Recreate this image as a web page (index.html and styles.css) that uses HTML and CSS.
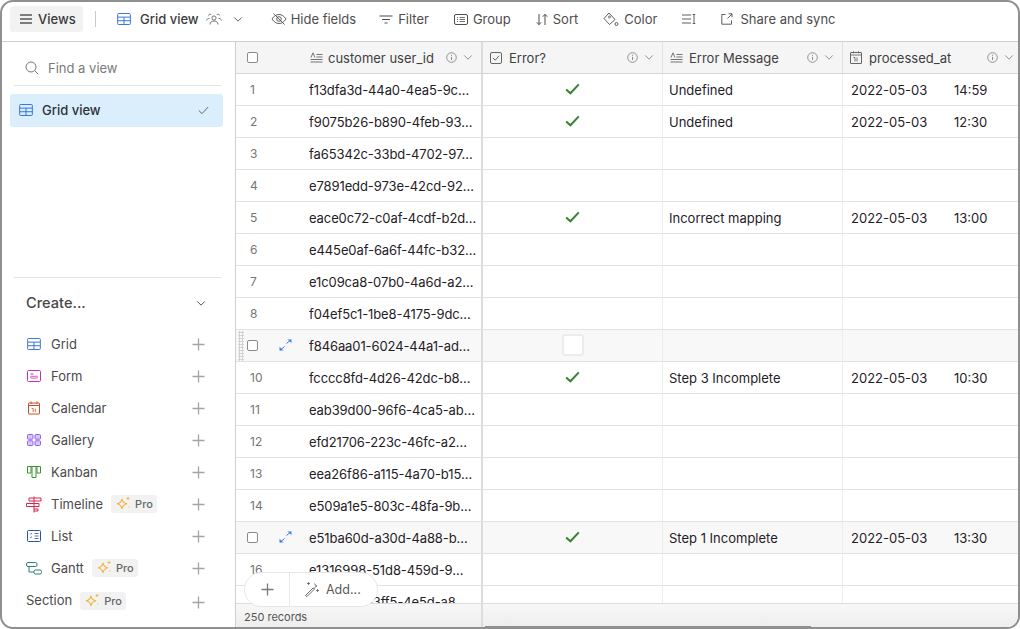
FILE: index.html
```html
<!DOCTYPE html>
<html lang="en">
<head>
<meta charset="utf-8">
<title>Grid view</title>
<link rel="stylesheet" href="styles.css">
</head>
<body>
<svg class="defs" width="0" height="0" aria-hidden="true">
  <symbol id="grid" viewBox="0 0 16 14"><rect x=".6" y=".6" width="14.8" height="12.8" rx="1" fill="none" stroke="currentColor" stroke-width="1.1"/><path d="M.6 4.800h14.800M.6 9h14.800M8 4.800v8.600" fill="none" stroke="currentColor" stroke-width="1.1"/></symbol>
  <symbol id="chev" viewBox="0 0 12 8"><path d="M1.500 1.500 6 6l4.500-4.500" fill="none" stroke="currentColor" stroke-width="1.1"/></symbol>
  <symbol id="plus" viewBox="0 0 13 13"><path d="M6.500.5v12M.5 6.500h12" fill="none" stroke="currentColor" stroke-width="1.3"/></symbol>
  <symbol id="info" viewBox="0 0 11 11"><circle cx="5.500" cy="5.500" r="4.800" fill="none" stroke="currentColor" stroke-width=".9"/><path d="M5.500 4.800v3.200M5.500 2.800v1" fill="none" stroke="currentColor"/></symbol>
  <symbol id="text" viewBox="0 0 13 11"><path d="M3 .8 1 5.500M3 .8l2 4.700M6.500 2.500h6M6.500 5h6M.5 7.500h12M.5 10h12" fill="none" stroke="currentColor" stroke-width=".9"/></symbol>
  <symbol id="check" viewBox="0 0 15 12"><path d="M1.200 6.400 5.400 10.300 13.800 1.400" fill="none" stroke="currentColor" stroke-width="2"/></symbol>
  <symbol id="expand" viewBox="0 0 13 12"><path d="M7.500 4.500 11.500 1M1.500 11 5.500 7.500" fill="none" stroke="currentColor" stroke-width="1"/><path d="M8.500.5h4v3.600zM.5 11.500V7.800l4 3.700z" fill="currentColor"/></symbol>
  <symbol id="spark" viewBox="0 0 16 16"><path d="M7 2.800c.5 3 1.700 4.300 5 5-3.300.7-4.500 2-5 5.200-.5-3.200-1.700-4.500-5-5.200 3.300-.7 4.500-2 5-5z" fill="none" stroke="currentColor" stroke-width="1.100"/><path d="M13 1v3M11.500 2.500h3M13.800 10.500v1" fill="none" stroke="currentColor" stroke-width=".9"/></symbol>
</svg>

<div class="window">
  <header class="toolbar">
    <button class="views-btn">
      <svg class="ic12" viewBox="0 0 12 10"><path d="M0 1h12M0 5h12M0 9h12" fill="none" stroke="currentColor" stroke-width="1.300"/></svg>
      Views
    </button>
    <span class="tb-sep"></span>
    <span class="tb-view">
      <svg class="ic-grid blue"><use href="#grid"/></svg>
      <span class="tb-view-name">Grid view</span>
      <svg class="ic-people" viewBox="0 0 16 12"><circle cx="8" cy="5" r="2.100" fill="none" stroke="currentColor" stroke-width=".8"/><path d="M4 11.500c.3-2.500 1.700-3.500 4-3.500s3.700 1 4 3.500M2.500 2.500a1.500 1.500 0 0 1 2.800-.5M13.500 2.500a1.500 1.500 0 0 0-2.800-.5M.5 7.500C.8 6 2 5.500 3.500 5.500M15.500 7.500c-.3-1.500-1.500-2-3-2" fill="none" stroke="currentColor" stroke-width=".8"/></svg>
      <svg class="ic-chev tb-chev"><use href="#chev"/></svg>
    </span>
    <span class="tb-item tb-hide">
      <svg class="ic16" viewBox="0 0 16 12"><path d="M1 6c2-3 4.300-4.500 7-4.500S13 3 15 6c-2 3-4.300 4.500-7 4.500S3 9 1 6z" fill="none" stroke="currentColor" stroke-width=".9"/><circle cx="8" cy="6" r="2.300" fill="none" stroke="currentColor" stroke-width=".9"/><path d="M2.500 .5 13.500 11.500" stroke="currentColor" stroke-width=".9"/></svg>
      Hide fields
    </span>
    <span class="tb-item tb-filter">
      <svg class="ic15" viewBox="0 0 14 9"><path d="M.5 1h13M3 4.500h8M5.500 8h3" fill="none" stroke="currentColor" stroke-width="1.100"/></svg>
      Filter
    </span>
    <span class="tb-item tb-group">
      <svg class="ic14" viewBox="0 0 14 11"><rect x=".5" y=".5" width="13" height="10" rx="1.500" fill="none" stroke="currentColor"/><path d="M3 3.500h1M5.500 3.500h5.500M3 5.500h1M5.500 5.500h5.500M3 7.500h1M5.500 7.500h5.500" stroke="currentColor" stroke-width=".8"/></svg>
      Group
    </span>
    <span class="tb-item tb-sort">
      <svg class="ic13" viewBox="0 0 12 13"><path d="M3 1v10.500M.8 9.300 3 11.700l2.200-2.400M9 12V1.500M6.800 3.700 9 1.300l2.200 2.400" fill="none" stroke="currentColor" stroke-width="1"/></svg>
      Sort
    </span>
    <span class="tb-item tb-color">
      <svg class="ic16b" viewBox="0 0 16 15"><path d="M6 1 1 6.500l5.500 6L12 7.500z" fill="none" stroke="currentColor" stroke-width=".9"/><circle cx="6.500" cy="5" r="1" fill="none" stroke="currentColor" stroke-width=".8"/><circle cx="13.500" cy="12" r="1.500" fill="none" stroke="currentColor" stroke-width=".9"/></svg>
      Color
    </span>
    <svg class="ic-density" viewBox="0 0 14 10"><path d="M0 1h9M0 5h9M0 9h9M12 .5v9M10.700.5h2.600M10.700 9.500h2.600" fill="none" stroke="currentColor" stroke-width=".9"/></svg>
    <span class="tb-item tb-share">
      <svg class="ic12b" viewBox="0 0 12 12"><path d="M4.500 1.500H.8v9.700h9.700V7.500M6.500 5.500l4.500-4.500M7.500.8H11v3.500" fill="none" stroke="currentColor" stroke-width=".9"/></svg>
      Share and sync
    </span>
  </header>

  <div class="main">
    <aside class="sidebar">
      <div class="side-top">
        <div class="search">
          <svg class="ic-search" viewBox="0 0 14 14"><circle cx="6" cy="6" r="5" fill="none" stroke="currentColor" stroke-width="1"/><path d="m9.700 9.700 3.500 3.500" stroke="currentColor" stroke-width="1"/></svg>
          <span>Find a view</span>
        </div>
        <div class="view-active">
          <svg class="ic-grid blue"><use href="#grid"/></svg>
          <span class="view-active-name">Grid view</span>
          <svg class="ic-tick" viewBox="0 0 11 9"><path d="M.8 4.500 4 7.600 10.200 1" fill="none" stroke="currentColor" stroke-width="1"/></svg>
        </div>
      </div>
      <div class="create">
        <div class="create-head"><span>Create...</span><svg class="ic-chev create-chev"><use href="#chev"/></svg></div>
        <ul class="create-list">
          <li class="create-row"><svg class="ic-grid blue"><use href="#grid"/></svg><span class="cname">Grid</span><svg class="ic-plus"><use href="#plus"/></svg></li>
          <li class="create-row"><svg class="ic-type pink" viewBox="0 0 14 12"><rect x=".5" y=".5" width="13" height="11" rx="1" fill="none" stroke="currentColor"/><path d="M3.500 4h3" stroke="currentColor"/><rect x="3.500" y="6.300" width="7" height="1.800" rx=".9" fill="none" stroke="currentColor" stroke-width=".8"/></svg><span class="cname">Form</span><svg class="ic-plus"><use href="#plus"/></svg></li>
          <li class="create-row"><svg class="ic-type orange" viewBox="0 0 14 14"><rect x="1.500" y="2" width="11" height="11" rx=".5" fill="none" stroke="currentColor"/><path d="M1.500 4.500h11M4 .5v2.500M10 .5v2.500" fill="none" stroke="currentColor"/><path d="M4.700 7.500h1.500v3.500M8.300 7.500v3.500" fill="none" stroke="currentColor" stroke-width=".8"/></svg><span class="cname">Calendar</span><svg class="ic-plus"><use href="#plus"/></svg></li>
          <li class="create-row"><svg class="ic-type purple" viewBox="0 0 14 12"><rect x=".5" y=".5" width="5.500" height="4.700" rx="1" fill="#d9c8f7" stroke="currentColor"/><rect x="8" y=".5" width="5.500" height="4.700" rx="1" fill="#d9c8f7" stroke="currentColor"/><rect x=".5" y="6.800" width="5.500" height="4.700" rx="1" fill="#d9c8f7" stroke="currentColor"/><rect x="8" y="6.800" width="5.500" height="4.700" rx="1" fill="#d9c8f7" stroke="currentColor"/></svg><span class="cname">Gallery</span><svg class="ic-plus"><use href="#plus"/></svg></li>
          <li class="create-row"><svg class="ic-type green" viewBox="0 0 14 12"><path d="M.5.500h13v6.500h-3.500V.500M.5.500V7H4V.500M4 .500h6M5 .500v11h4V.500" fill="none" stroke="currentColor"/></svg><span class="cname">Kanban</span><svg class="ic-plus"><use href="#plus"/></svg></li>
          <li class="create-row"><svg class="ic-type red" viewBox="0 0 16 17"><path d="M8 .500v16M3 2h12v3H3zM.5 7.500H13v3H.5zM8 13h4v2H8" fill="none" stroke="currentColor"/></svg><span class="cname">Timeline</span><span class="pro"><svg class="ic-spark"><use href="#spark"/></svg>Pro</span><svg class="ic-plus"><use href="#plus"/></svg></li>
          <li class="create-row"><svg class="ic-type navy" viewBox="0 0 14 12"><rect x=".5" y=".5" width="13" height="11" rx="1" fill="none" stroke="currentColor"/><path d="M7.500 3.500h4M7.500 6h4M7.500 8.500h4M3 3.500l.7.7L5 3M3 7l.7.7L5 6.500" fill="none" stroke="currentColor" stroke-width=".8"/></svg><span class="cname">List</span><svg class="ic-plus"><use href="#plus"/></svg></li>
          <li class="create-row"><svg class="ic-type teal" viewBox="0 0 16 13"><rect x=".5" y=".5" width="10.500" height="4" rx="1.500" fill="none" stroke="currentColor"/><rect x="8" y="8" width="7.500" height="4" rx="1.500" fill="none" stroke="currentColor"/><path d="M3 4.500V10h5" fill="none" stroke="currentColor"/></svg><span class="cname">Gantt</span><span class="pro"><svg class="ic-spark"><use href="#spark"/></svg>Pro</span><svg class="ic-plus"><use href="#plus"/></svg></li>
          <li class="create-row section-row"><span class="sname">Section</span><span class="pro"><svg class="ic-spark"><use href="#spark"/></svg>Pro</span><svg class="ic-plus"><use href="#plus"/></svg></li>
        </ul>
      </div>
    </aside>

    <section class="table">
      <div class="row head">
        <div class="numcol"><span class="cb"></span></div>
        <div class="cell idcol hcell"><svg class="ic-text"><use href="#text"/></svg><span class="hname">customer user_id</span><svg class="ic-info"><use href="#info"/></svg><svg class="ic-hchev"><use href="#chev"/></svg></div>
        <div class="cell chkcol hcell"><svg class="ic-box" viewBox="0 0 12 12"><rect x=".5" y=".5" width="11" height="11" rx="1.500" fill="none" stroke="currentColor" stroke-width=".9"/><path d="M3 6l2.200 2.200L9 3.800" fill="none" stroke="currentColor" stroke-width=".9"/></svg><span class="hname">Error?</span><svg class="ic-info"><use href="#info"/></svg><svg class="ic-hchev"><use href="#chev"/></svg></div>
        <div class="cell msgcol hcell"><svg class="ic-text"><use href="#text"/></svg><span class="hname">Error Message</span><svg class="ic-info"><use href="#info"/></svg><svg class="ic-hchev"><use href="#chev"/></svg></div>
        <div class="cell datecol hcell"><svg class="ic-cal" viewBox="0 0 12 13"><rect x=".5" y="1.500" width="11" height="11" rx=".5" fill="none" stroke="currentColor" stroke-width=".9"/><path d="M.5 4h11M3.500.3v2M8.500.3v2M3.500 6.500h1.500v4M7 6.500v4" fill="none" stroke="currentColor" stroke-width=".8"/></svg><span class="hname">processed_at</span><svg class="ic-info"><use href="#info"/></svg><svg class="ic-hchev"><use href="#chev"/></svg></div>
      </div>
      <div class="rows">
        <div class="row"><div class="numcol">1</div><div class="cell idcol">f13dfa3d-44a0-4ea5-9c…</div><div class="cell chkcol"><svg class="ic-check"><use href="#check"/></svg></div><div class="cell msgcol">Undefined</div><div class="cell datecol"><span class="date">2022-05-03</span><span>14:59</span></div></div>
        <div class="row"><div class="numcol">2</div><div class="cell idcol">f9075b26-b890-4feb-93…</div><div class="cell chkcol"><svg class="ic-check"><use href="#check"/></svg></div><div class="cell msgcol">Undefined</div><div class="cell datecol"><span class="date">2022-05-03</span><span>12:30</span></div></div>
        <div class="row"><div class="numcol">3</div><div class="cell idcol">fa65342c-33bd-4702-97…</div><div class="cell chkcol"></div><div class="cell msgcol"></div><div class="cell datecol"></div></div>
        <div class="row"><div class="numcol">4</div><div class="cell idcol">e7891edd-973e-42cd-92…</div><div class="cell chkcol"></div><div class="cell msgcol"></div><div class="cell datecol"></div></div>
        <div class="row"><div class="numcol">5</div><div class="cell idcol">eace0c72-c0af-4cdf-b2d…</div><div class="cell chkcol"><svg class="ic-check"><use href="#check"/></svg></div><div class="cell msgcol">Incorrect mapping</div><div class="cell datecol"><span class="date">2022-05-03</span><span>13:00</span></div></div>
        <div class="row"><div class="numcol">6</div><div class="cell idcol">e445e0af-6a6f-44fc-b32…</div><div class="cell chkcol"></div><div class="cell msgcol"></div><div class="cell datecol"></div></div>
        <div class="row"><div class="numcol">7</div><div class="cell idcol">e1c09ca8-07b0-4a6d-a2…</div><div class="cell chkcol"></div><div class="cell msgcol"></div><div class="cell datecol"></div></div>
        <div class="row"><div class="numcol">8</div><div class="cell idcol">f04ef5c1-1be8-4175-9dc…</div><div class="cell chkcol"></div><div class="cell msgcol"></div><div class="cell datecol"></div></div>
        <div class="row hover"><div class="numcol"><span class="grip"></span><span class="cb"></span><svg class="ic-expand"><use href="#expand"/></svg></div><div class="cell idcol">f846aa01-6024-44a1-ad…</div><div class="cell chkcol"><span class="bigbox"></span></div><div class="cell msgcol"></div><div class="cell datecol"></div></div>
        <div class="row"><div class="numcol">10</div><div class="cell idcol">fcccc8fd-4d26-42dc-b8…</div><div class="cell chkcol"><svg class="ic-check"><use href="#check"/></svg></div><div class="cell msgcol">Step 3 Incomplete</div><div class="cell datecol"><span class="date">2022-05-03</span><span>10:30</span></div></div>
        <div class="row"><div class="numcol">11</div><div class="cell idcol">eab39d00-96f6-4ca5-ab…</div><div class="cell chkcol"></div><div class="cell msgcol"></div><div class="cell datecol"></div></div>
        <div class="row"><div class="numcol">12</div><div class="cell idcol">efd21706-223c-46fc-a2…</div><div class="cell chkcol"></div><div class="cell msgcol"></div><div class="cell datecol"></div></div>
        <div class="row"><div class="numcol">13</div><div class="cell idcol">eea26f86-a115-4a70-b15…</div><div class="cell chkcol"></div><div class="cell msgcol"></div><div class="cell datecol"></div></div>
        <div class="row"><div class="numcol">14</div><div class="cell idcol">e509a1e5-803c-48fa-9b…</div><div class="cell chkcol"></div><div class="cell msgcol"></div><div class="cell datecol"></div></div>
        <div class="row hover"><div class="numcol"><span class="cb"></span><svg class="ic-expand"><use href="#expand"/></svg></div><div class="cell idcol">e51ba60d-a30d-4a88-b…</div><div class="cell chkcol"><svg class="ic-check"><use href="#check"/></svg></div><div class="cell msgcol">Step 1 Incomplete</div><div class="cell datecol"><span class="date">2022-05-03</span><span>13:30</span></div></div>
        <div class="row"><div class="numcol">16</div><div class="cell idcol">e1316998-51d8-459d-9…</div><div class="cell chkcol"></div><div class="cell msgcol"></div><div class="cell datecol"></div></div>
        <div class="row"><div class="numcol">17</div><div class="cell idcol">e7c2d4b1-3ff5-4e5d-a8…</div><div class="cell chkcol"></div><div class="cell msgcol"></div><div class="cell datecol"></div></div>
      </div>
      <footer class="foot"><div class="foot-left">250 records</div><div class="foot-right"></div></footer>
      <div class="addbar">
        <span class="add-plus"><svg class="ic-plus dark"><use href="#plus"/></svg></span>
        <span class="add-more"><svg class="ic-wand" viewBox="0 0 15 15"><path d="M1.500 13.500 9 6M3 14.500 10.500 7M1.500 13.500l1.500 1M9 6l1.500 1" fill="none" stroke="currentColor" stroke-width=".9"/><path d="M3 1.500h3M4.500 0v3M12 8.500h3M13.500 7v3M10.500 1.500l.8 1.700 1.700.8-1.700.8-.8 1.700" fill="none" stroke="currentColor" stroke-width=".8"/></svg>Add...</span>
      </div>
      <span class="scroll-thumb"></span>
    </section>
  </div>
</div>
</body>
</html>
```
FILE: styles.css
```css
* { box-sizing: border-box; }
html, body { margin: 0; padding: 0; background: #fff; }
body { width: 1020px; height: 629px; overflow: hidden; font-family: Inter, "Liberation Sans", sans-serif; font-size: 13px; color: #1f2126; }
.defs { position: absolute; }
svg { display: block; flex: none; }
ul { list-style: none; margin: 0; padding: 0; }

.window { width: 1020px; height: 629px; border: 2px solid #8f8f8f; border-radius: 13px; overflow: hidden; display: flex; flex-direction: column; background: #fff; }

.toolbar { height: 40px; flex: none; border-bottom: 1px solid #cfcfcf; display: flex; align-items: center; padding: 0 0 5px 8px; color: #4d4d4d; font-size: 13px; }
.views-btn { width: 73px; height: 26px; border: 0; border-radius: 3px; background: #f2f2f2; color: #3a3a3a; font: 500 13px Inter, sans-serif; display: flex; align-items: center; gap: 6px; padding: 0 0 0 10px; }
.ic12 { width: 12px; height: 10px; color: #555; }
.tb-sep { width: 1px; height: 16px; background: #c9c9c9; margin-left: 12px; }
.tb-view { display: flex; align-items: center; margin-left: 21px; }
.tb-view-name { margin-left: 9px; color: #3c3c3c; font-weight: 500; }
.ic-grid { width: 14px; height: 12px; }
.blue { color: #2f6fe0; }
.ic-people { width: 16px; height: 12px; margin-left: 7px; color: #555; }
.ic-chev { width: 10px; height: 7px; }
.tb-chev { margin-left: 11px; color: #555; }
.tb-item { display: flex; align-items: center; white-space: nowrap; }
.tb-hide { margin-left: 28px; gap: 4px; }
.ic16 { width: 16px; height: 12px; }
.tb-filter { margin-left: 23px; gap: 5px; }
.ic15 { width: 14px; height: 9px; }
.tb-group { margin-left: 25px; gap: 5px; }
.ic14 { width: 14px; height: 11px; }
.tb-sort { margin-left: 25px; gap: 5px; }
.ic13 { width: 12px; height: 13px; }
.tb-color { margin-left: 25px; gap: 5px; }
.ic16b { width: 16px; height: 15px; }
.ic-density { width: 14px; height: 10px; margin-left: 25px; color: #4d4d4d; }
.tb-share { margin-left: 25px; gap: 7px; }
.ic12b { width: 12px; height: 12px; }

.main { flex: 1; min-height: 0; display: flex; }

.sidebar { width: 234px; flex: none; border-right: 1px solid #cfcfcf; display: flex; flex-direction: column; justify-content: space-between; }
.search { margin: 0 14px 0 12px; height: 44px; padding: 8px 0 0 11px; border-bottom: 1px solid #e4e4e4; display: flex; align-items: center; gap: 9px; color: #7a7a7a; }
.ic-search { width: 14px; height: 14px; color: #777; }
.view-active { margin: 8px 12px 0 8px; height: 33px; background: #daeefb; border-radius: 3px; display: flex; align-items: center; padding: 0 14px 1px 9px; color: #2d3138; font-weight: 500; }
.view-active-name { margin-left: 9px; flex: 1; }
.ic-tick { width: 11px; height: 9px; color: #666; }

.create { margin: 0 14px 0 12px; border-top: 1px solid #e4e4e4; padding-bottom: 11px; }
.create-head { height: 50px; display: flex; align-items: center; justify-content: space-between; padding: 0 12px; font-size: 14.600px; font-weight: 500; color: #474747; }
.create-chev { margin-right: 3px; color: #444; }
.create-row { height: 32px; display: flex; align-items: center; padding-left: 13px; color: #4b4b4b; }
.create-row > .ic-grid { margin-right: 10px; }
.ic-type { width: 14px; height: 12px; margin-right: 10px; }
.pink { color: #cc2fb0; }
.orange { color: #c4502a; height: 14px; }
.purple { color: #8e63e8; }
.green { color: #3c9431; }
.red { color: #d8294a; width: 16px; height: 17px; margin-left: -1px; margin-right: 9px; }
.navy { color: #2453a8; }
.teal { color: #2f7d71; width: 16px; height: 13px; margin-left: -1px; margin-right: 9px; }
.cname { display: block; }
.pro { display: flex; align-items: center; height: 18px; margin-left: 8px; padding: 0 4px; gap: 4px; background: #f2f2f2; border-radius: 3px; color: #666; font-size: 11px; font-weight: 500; }
.ic-spark { width: 16px; height: 16px; color: #f4b13a; }
.ic-plus { width: 13px; height: 13px; margin-left: auto; margin-right: 16px; color: #a3a3a3; }
.section-row { padding-left: 12px; }
.section-row .ic-plus { margin-top: 4px; }
.section-row .pro { margin-top: 2px; margin-left: 8px; }
.sname { color: #4b4b4b; }

.table { flex: 1; min-width: 0; position: relative; display: flex; flex-direction: column; }
.row { height: 32px; flex: none; display: flex; align-items: stretch; border-bottom: 1px solid #e2e2e2; }
.head { background: #f5f5f5; border-bottom-color: #d6d6d6; color: #3f3f3f; }
.hover { background: #f8f8f8; }
.rows { flex: 1; min-height: 0; overflow: hidden; }
.numcol { width: 73px; flex: none; display: flex; align-items: center; padding-left: 14px; color: #757575; font-size: 12px; position: relative; }
.cell { display: flex; align-items: center; white-space: nowrap; overflow: hidden; min-width: 0; }
.idcol { width: 174px; flex: none; border-right: 2px solid #dcdcdc; letter-spacing: -0.1px; }
.chkcol { width: 180px; flex: none; border-right: 1px solid #ededed; justify-content: center; }
.msgcol { width: 180px; flex: none; border-right: 1px solid #ededed; padding-left: 6px; }
.datecol { flex: 1; padding-left: 8px; }
.date { width: 103px; }
.hcell { justify-content: flex-start; padding-right: 8px; border-right-color: #e2e2e2; letter-spacing: 0; }
.chkcol.hcell { padding-left: 7px; }
.msgcol.hcell { padding-left: 7px; }
.datecol.hcell { padding-left: 7px; padding-right: 4px; }
.idcol.hcell { padding-left: 1px; border-right-color: #dcdcdc; }
.idcol.hcell .ic-text { margin-right: 5px; }
.hname { flex: 1; }
.ic-text { width: 13px; height: 11px; color: #666; margin-right: 6px; }
.ic-box { width: 12px; height: 12px; color: #555; margin-right: 7px; }
.ic-cal { width: 12px; height: 13px; color: #555; margin-right: 7px; }
.ic-info { width: 11px; height: 11px; color: #888; }
.ic-hchev { width: 10px; height: 7px; color: #8a8a8a; margin-left: 6px; }
.cb { width: 11px; height: 11px; border: 1px solid #8a8a8a; border-radius: 2px; background: #fff; margin-left: -3px; }
.ic-check { width: 15px; height: 12px; color: #33862f; margin-top: -2px; }
.ic-expand { position: absolute; left: 43px; top: 9px; width: 13px; height: 12px; color: #3b82ea; }
.bigbox { width: 22px; height: 22px; border: 2px solid #ececec; border-radius: 3px; background: #fff; margin-top: -1px; }
.grip { position: absolute; left: 2px; top: 1px; width: 6px; height: 30px; background-image: radial-gradient(circle, #d2d2d2 1px, transparent 1.200px); background-size: 3px 3px; }

.foot { height: 24px; flex: none; display: flex; border-top: 1px solid #dcdcdc; background: linear-gradient(#f8f8f8, #ededed); font-size: 11px; color: #555; }
.foot-left { width: 247px; padding: 6px 0 0 8px; border-right: 2px solid #dcdcdc; }
.foot-right { flex: 1; }

.addbar { position: absolute; left: 8px; top: 530px; width: 134px; height: 35px; border: 1px solid #e6e6e6; border-radius: 18px; background: #fff; display: flex; align-items: center; color: #5a5a5a; font-size: 12.500px; }
.add-plus { width: 45px; height: 100%; border-right: 1px solid #e6e6e6; display: flex; align-items: center; justify-content: center; }
.ic-plus.dark { margin: 0; color: #7a7a7a; }
.add-more { display: flex; align-items: center; gap: 7px; padding-left: 14px; }
.ic-wand { width: 15px; height: 15px; }
.scroll-thumb { position: absolute; left: 249px; width: 326px; bottom: 0; height: 1px; background: #8f8f8f; }
```
